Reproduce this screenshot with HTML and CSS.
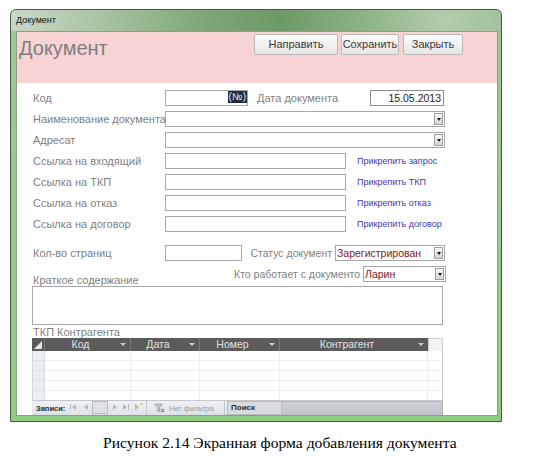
FILE: index.html
```html
<!DOCTYPE html>
<html lang="ru">
<head>
<meta charset="utf-8">
<title>Документ</title>
<link rel="stylesheet" href="styles.css">
</head>
<body>
<div class="window">
  <div class="titlebar">Документ</div>
  <div class="client">
    <div class="header">
      <div class="heading">Документ</div>
      <div class="buttons">
        <div class="btn btn-send">Направить</div>
        <div class="btn btn-save">Сохранить</div>
        <div class="btn btn-close">Закрыть</div>
      </div>
    </div>
    <div class="form">
      <div class="row">
        <div class="label">Код</div>
        <div class="field f-code"><span class="sel">(№)</span></div>
        <div class="label l-date">Дата документа</div>
        <div class="field f-date">15.05.2013</div>
      </div>
      <div class="row">
        <div class="label">Наименование документа</div>
        <div class="field combo f-wide"><span class="ctext"></span><span class="dd"></span></div>
      </div>
      <div class="row">
        <div class="label">Адресат</div>
        <div class="field combo f-wide"><span class="ctext"></span><span class="dd"></span></div>
      </div>
      <div class="row">
        <div class="label">Ссылка на входящий</div>
        <div class="field f-link"></div>
        <div class="link">Прикрепить запрос</div>
      </div>
      <div class="row">
        <div class="label">Ссылка на ТКП</div>
        <div class="field f-link"></div>
        <div class="link">Прикрепить ТКП</div>
      </div>
      <div class="row">
        <div class="label">Ссылка на отказ</div>
        <div class="field f-link"></div>
        <div class="link">Прикрепить отказ</div>
      </div>
      <div class="row">
        <div class="label">Ссылка на договор</div>
        <div class="field f-link"></div>
        <div class="link">Прикрепить договор</div>
      </div>
      <div class="row row-pages">
        <div class="label">Кол-во страниц</div>
        <div class="field f-pages"></div>
        <div class="label l-status">Статус документ</div>
        <div class="field combo f-status"><span class="ctext">Зарегистрирован</span><span class="dd"></span></div>
      </div>
      <div class="row">
        <div class="label"></div>
        <div class="label l-who">Кто работает с документо</div>
        <div class="field combo f-who"><span class="ctext">Ларин</span><span class="dd"></span></div>
      </div>
      <div class="label-block l-summary">Краткое содержание</div>
      <div class="textarea"></div>
      <div class="label-block l-tkp">ТКП Контрагента</div>
      <div class="sheet">
        <div class="sh-head">
          <div class="hc c-sel"><span class="corner"></span></div>
          <div class="hc c-code"><span class="ht">Код</span><span class="arr"></span></div>
          <div class="hc c-date"><span class="ht">Дата</span><span class="arr"></span></div>
          <div class="hc c-num"><span class="ht">Номер</span><span class="arr"></span></div>
          <div class="hc c-ctr"><span class="ht">Контрагент</span><span class="arr"></span></div>
          <div class="hc-fill"></div>
        </div>
        <div class="sh-body">
          <div class="bc c-sel b-sel"></div>
          <div class="bc c-code"></div>
          <div class="bc c-date"></div>
          <div class="bc c-num"></div>
          <div class="bc c-ctr"></div>
          <div class="bc b-fill"></div>
        </div>
        <div class="nav">
          <div class="nav-rec">
            <span class="nav-label">Записи:</span>
            <svg class="nav-arrows" width="80" height="15" viewBox="0 0 80 15">
              <rect x="4" y="4" width="1" height="6" fill="#b4b7bb"/>
              <path d="M10 4 L6 7 L10 10 Z" fill="#b4b7bb"/>
              <path d="M22 4 L18 7 L22 10 Z" fill="#b4b7bb"/>
              <rect x="26.5" y="1.5" width="15" height="12" fill="#dfe1e5" stroke="#b9bcc1"/>
              <path d="M47 4 L51 7 L47 10 Z" fill="#b4b7bb"/>
              <path d="M57 4 L61 7 L57 10 Z" fill="#b4b7bb"/>
              <rect x="62" y="4" width="1" height="6" fill="#b4b7bb"/>
              <path d="M69 4 L73 7 L69 10 Z" fill="#b4b7bb"/>
              <path d="M75 3 L76 5 M74 4 L77 4" stroke="#e0c060" stroke-width="1"/>
            </svg>
          </div>
          <div class="nav-filter">
            <svg class="funnel" width="11" height="10" viewBox="0 0 11 10">
              <path d="M0.5 1 L8.5 1 L5.5 4.5 L5.5 9 L3.5 8 L3.5 4.5 Z" fill="#c2c5c9" stroke="#9a9ea4" stroke-width="0.8"/>
              <path d="M7 6 L10 9 M10 6 L7 9" stroke="#8a8e94" stroke-width="1.2"/>
            </svg>
            <span class="nav-text">Нет фильтра</span>
          </div>
          <div class="nav-search">Поиск</div>
          <div class="nav-scroll"></div>
        </div>
      </div>
    </div>
  </div>
</div>
<div class="caption">Рисунок 2.14 Экранная форма добавления документа</div>
</body>
</html>
```

FILE: styles.css
```css
html, body {
  margin: 0;
  padding: 0;
  background: #ffffff;
}

body {
  width: 537px;
  height: 460px;
  overflow: hidden;
  font-family: "Liberation Sans", Arial, sans-serif;
}

.window {
  margin: 9px 0 0 10px;
  width: 492px;
  height: 413px;
  box-sizing: border-box;
  border: 1px solid #4b5649;
  border-radius: 6px 6px 0 0;
  padding: 0 3px 5px 5px;
  display: flex;
  flex-direction: column;
  background:
    linear-gradient(to bottom, rgba(0,0,0,0) 0, rgba(0,0,0,0) 21px, #9cc893 21px, #8fcc80 100%),
    linear-gradient(to right, #cad8c6 0%, #a9c4a3 18%, #7ea676 40%, #6c9a64 55%, #8cb384 72%, #b2ccac 88%, #a3c39d 100%);
}

.titlebar {
  height: 21px;
  line-height: 21px;
  font-size: 9px;
  color: #141414;
  padding-left: 0;
  white-space: nowrap;
}

.client {
  flex: 1;
  background: #ffffff;
  border: 1px solid #8f9c8c;
  display: flex;
  flex-direction: column;
  overflow: hidden;
}

/* header */
.header {
  height: 51px;
  flex: none;
  background: #f7d3d3;
  display: flex;
  align-items: flex-start;
}

.heading {
  margin-top: 5px;
  padding-left: 2px;
  font-size: 20px;
  line-height: 23px;
  color: #7e7e7e;
}

.buttons {
  margin-left: auto;
  margin-right: 34px;
  margin-top: 2px;
  display: flex;
  gap: 3px;
}

.btn {
  height: 21px;
  box-sizing: border-box;
  border: 1px solid #b9b9b9;
  border-radius: 2px;
  background: linear-gradient(to bottom, #fbfbfb, #e6e6e6);
  font-size: 11px;
  line-height: 19px;
  color: #3a3a3a;
  text-align: center;
}

.btn-send { width: 84px; }
.btn-save { width: 58px; }
.btn-close { width: 60px; margin-left: 1px; }

/* form */
.form {
  padding: 7px 0 0 15px;
  display: flex;
  flex-direction: column;
  flex: 1;
}

.row {
  display: flex;
  align-items: center;
  height: 16px;
  margin-bottom: 5px;
}

.row-pages {
  margin-top: 8px;
}

.label {
  width: 133px;
  flex: none;
  box-sizing: border-box;
  padding-left: 1px;
  font-size: 11px;
  color: #7f7f7f;
  white-space: nowrap;
  overflow: hidden;
}

.l-date {
  width: 113px;
  margin-left: 9px;
  padding-left: 0;
}

.l-status {
  width: 93px;
  text-align: right;
  padding-right: 3px;
  padding-left: 0;
  font-size: 10.5px;
}

.l-who {
  width: 198px;
  text-align: right;
  padding-right: 3px;
  padding-left: 0;
  font-size: 10.5px;
}

.field {
  height: 16px;
  flex: none;
  box-sizing: border-box;
  border: 1px solid #a7a7a7;
  background: #ffffff;
  display: flex;
  align-items: center;
}

.f-code {
  width: 83px;
  justify-content: flex-end;
  align-items: flex-start;
}

.sel {
  background: #1d2a44;
  color: #e8ecf4;
  font-size: 10px;
  line-height: 12px;
  padding: 0 1px;
}

.f-date {
  width: 74px;
  justify-content: flex-end;
  padding-right: 2px;
  font-size: 10.5px;
  color: #222;
  border-color: #8c8c8c;
}

.f-wide { width: 280px; }
.f-link { width: 181px; }
.f-pages { width: 77px; }
.f-status { width: 110px; }
.f-who { width: 83px; }

.combo .ctext {
  flex: 1;
  padding-left: 1px;
  font-size: 10.5px;
  color: #7c2222;
  white-space: nowrap;
  overflow: hidden;
}

.dd {
  width: 9px;
  height: 12px;
  margin-right: 1px;
  box-sizing: border-box;
  border: 1px solid #9d9d9d;
  background: linear-gradient(to bottom, #fafafa, #d6d6d6);
  display: flex;
  align-items: center;
  justify-content: center;
}

.dd::after {
  content: "";
  border-left: 2.5px solid transparent;
  border-right: 2.5px solid transparent;
  border-top: 3px solid #111;
}

.link {
  margin-left: 11px;
  font-size: 9px;
  color: #3b3baa;
  white-space: nowrap;
}

.label-block {
  font-size: 11px;
  color: #7f7f7f;
  padding-left: 1px;
  height: 12px;
  line-height: 12px;
  white-space: nowrap;
}

.l-summary {
  margin-top: -13px;
}

.l-tkp {
  height: 13px;
  line-height: 14px;
}

.textarea {
  width: 411px;
  height: 39px;
  box-sizing: border-box;
  border: 1px solid #a7a7a7;
  background: #fff;
}

/* datasheet */
.sheet {
  width: 411px;
  height: 77px;
  display: flex;
  flex-direction: column;
}

.sh-head {
  height: 13px;
  display: flex;
  flex: none;
}

.hc {
  height: 13px;
  box-sizing: border-box;
  background: #5b5b5b;
  border-right: 1px solid #767676;
  display: flex;
  align-items: center;
  color: #e2e2e2;
  font-size: 10.5px;
}

.c-sel { width: 13px; flex: none; position: relative; }
.c-code { width: 86px; flex: none; }
.c-date { width: 69px; flex: none; }
.c-num { width: 80px; flex: none; }
.c-ctr { width: 148px; flex: none; }

.hc.c-ctr { border-right: none; }

.corner {
  position: absolute;
  right: 2px;
  bottom: 2px;
  width: 0;
  height: 0;
  border-left: 8px solid transparent;
  border-bottom: 8px solid #e4e4e4;
}

.ht {
  flex: 1;
  text-align: center;
  line-height: 13px;
  white-space: nowrap;
}

.arr {
  width: 14px;
  display: flex;
  justify-content: center;
  align-items: center;
}

.arr::after {
  content: "";
  width: 0;
  height: 0;
  border-left: 3px solid transparent;
  border-right: 3px solid transparent;
  border-top: 3px solid #cfcfcf;
}

.hc-fill {
  flex: 1;
  background: #f3f3f3;
  border: 1px solid #cdcdcd;
  border-bottom: none;
}

.sh-body {
  height: 49px;
  display: flex;
  flex: none;
  border-right: 1px solid #c9c9c9;
  border-left: 1px solid #d2d6dc;
  box-sizing: border-box;
}

.bc {
  height: 49px;
  box-sizing: border-box;
  border-right: 1px solid #eeeeee;
  background: repeating-linear-gradient(to bottom, #ffffff 0, #ffffff 9px, #eeeeee 9px, #eeeeee 10px);
}

.b-sel {
  width: 12px;
  border-right: 1px solid #d4d8de;
  background: repeating-linear-gradient(to bottom, #e9edf4 0, #e9edf4 9px, #dde2ea 9px, #dde2ea 10px);
}

.b-fill {
  flex: 1;
  border-right: none;
}

.nav {
  height: 15px;
  flex: none;
  display: flex;
  align-items: stretch;
  box-sizing: border-box;
  border-top: 1px solid #c4c8ce;
  background: linear-gradient(to bottom, #eff1f4, #dde1e6);
  font-size: 7.5px;
}

.nav-rec {
  width: 115px;
  flex: none;
  display: flex;
  align-items: center;
  border-right: 1px solid #c4c8ce;
  box-sizing: border-box;
  padding-left: 4px;
}

.nav-label {
  font-weight: bold;
  color: #2e2e2e;
  width: 30px;
  white-space: nowrap;
}

.nav-arrows {
  display: block;
  margin-top: -1px;
}

.nav-filter {
  width: 78px;
  flex: none;
  display: flex;
  align-items: center;
  border-right: 1px solid #c4c8ce;
  box-sizing: border-box;
  padding-left: 7px;
}

.funnel {
  display: block;
  margin-right: 4px;
}

.nav-text {
  color: #9b9ea3;
  font-size: 7.5px;
  white-space: nowrap;
}

.nav-search {
  width: 55px;
  flex: none;
  margin-left: 2px;
  box-sizing: border-box;
  border: 1px solid #b9bcc1;
  background: #d9dbde;
  font-weight: bold;
  font-size: 8px;
  color: #2e2e2e;
  line-height: 12px;
  padding-left: 3px;
}

.nav-scroll {
  flex: 1;
  background: linear-gradient(to bottom, #ccd0d5, #bec2c7);
  border-top: 1px solid #b4b8bd;
  border-right: 1px solid #a9adb2;
}

/* caption */
.caption {
  margin-top: 12px;
  padding-left: 103px;
  font-family: "Liberation Serif", "Times New Roman", serif;
  font-size: 15.6px;
  line-height: 18px;
  color: #000;
  white-space: nowrap;
}
```
